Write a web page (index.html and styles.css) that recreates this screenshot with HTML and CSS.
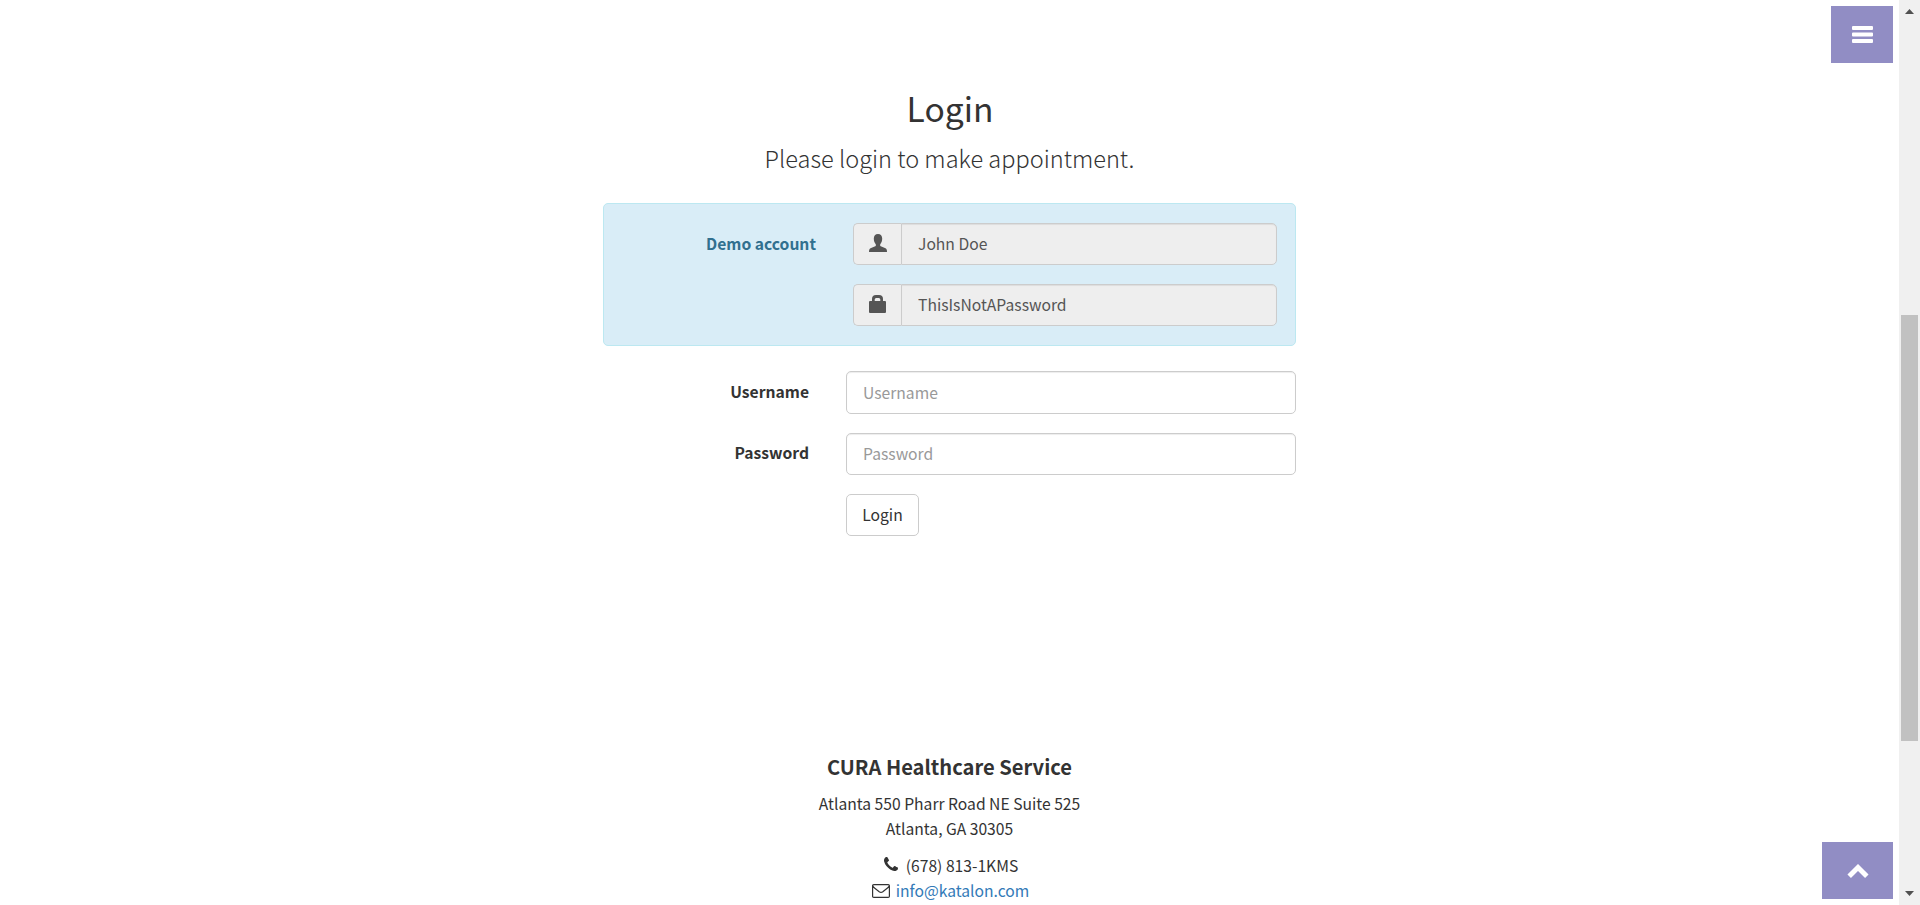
FILE: index.html
```html
<!DOCTYPE html>
<html lang="en">
<head>
<meta charset="utf-8">
<title>CURA Healthcare Service</title>
<link rel="stylesheet" href="styles.css">
</head>
<body>
<div class="page">
  <main class="content">
    <section class="login">
      <h2 class="title">Login</h2>
      <p class="lead">Please login to make appointment.</p>
      <form class="form">
        <div class="demo">
          <div class="row">
            <label class="label">Demo account</label>
            <div class="group">
              <span class="addon"><svg class="glyph" viewBox="0 0 18 18"><path d="M9 0C6.300 0 4.800 1.900 4.800 4.600 4.800 7 5.500 9 6.800 10.200V12L1.500 14.300C.5 14.800 0 15.700 0 18H18C18 15.700 17.500 14.800 16.500 14.300L11.200 12V10.200C12.500 9 13.200 7 13.200 4.600 13.200 1.900 11.700 0 9 0Z"/></svg></span>
              <input class="input joined" value="John Doe" readonly>
            </div>
          </div>
          <div class="row">
            <span class="label"></span>
            <div class="group">
              <span class="addon"><svg class="glyph" viewBox="0 0 18 18"><path fill-rule="evenodd" d="M3 6V4Q3 0 7 0H10Q14 0 14 4V6H16Q17 6 17 7V17Q17 18 16 18H1Q0 18 0 17V7Q0 6 1 6ZM5.700 6H11.300V4.500Q11.300 3 9.800 3H7.200Q5.700 3 5.700 4.500Z"/></svg></span>
              <input class="input joined" value="ThisIsNotAPassword" readonly>
            </div>
          </div>
        </div>
        <div class="row">
          <label class="label" for="username">Username</label>
          <input class="input" id="username" placeholder="Username">
        </div>
        <div class="row">
          <label class="label" for="password">Password</label>
          <input class="input" id="password" type="password" placeholder="Password">
        </div>
        <div class="row">
          <span class="label"></span>
          <button class="submit" type="button">Login</button>
        </div>
      </form>
    </section>
    <footer class="footer">
      <h4 class="brand">CURA Healthcare Service</h4>
      <p class="address">Atlanta 550 Pharr Road NE Suite 525<br>Atlanta, GA 30305</p>
      <ul class="contacts">
        <li class="contact phone-line"><svg class="phone" viewBox="0 0 1408 1408"><path d="M1408 1112q0 27-10 70.500t-21 68.500q-21 50-122 106-94 51-186 51-27 0-53-3.500t-57.500-12.500-47-14.500-55.500-20.500-49-18q-98-35-175-83-127-79-264-216t-216-264q-48-77-83-175-3-9-18-49t-20.500-55.500-14.500-47-12.500-57.500-3.500-53q0-92 51-186 56-101 106-122 25-11 68.500-21t70.500-10q14 0 21 3 18 6 53 76 11 19 30 54t35 63.500 31 53.500q3 4 17.500 25t21.500 35.500 7 28.500q0 20-28.500 50t-62 55-62 53-28.500 46q0 9 5 22.500t8.500 20.500 14 24 11.500 19q76 137 174 235t235 174q2 1 19 11.500t24 14 20.500 8.500 22.500 5q18 0 46-28.500t53-62 55-62 50-28.500q14 0 28.500 7t35.500 21.500 25 17.500q25 15 53.500 31t63.500 35 54 30q70 35 76 53 3 7 3 21z"/></svg><span>(678) 813-1KMS</span></li>
        <li class="contact"><svg class="mail" viewBox="0 0 18 14"><path d="M1.800.6H16.200Q17.400.6 17.400 1.800V12.200Q17.400 13.400 16.200 13.400H1.800Q.6 13.400.6 12.200V1.800Q.6.6 1.800.6ZM.7 1.800Q1.200 3 2.500 4L7.200 7.700Q9 9 10.800 7.700L15.500 4Q16.800 3 17.300 1.800"/></svg><a class="link" href="mailto:info@katalon.com">info@katalon.com</a></li>
      </ul>
    </footer>
    <a class="toggle" href="#"><svg class="bars" viewBox="0 0 21 17"><path d="M1 0H20Q21 0 21 1V3Q21 4 20 4H1Q0 4 0 3V1Q0 0 1 0ZM1 6.500H20Q21 6.500 21 7.500V9.500Q21 10.500 20 10.500H1Q0 10.500 0 9.500V7.500Q0 6.500 1 6.500ZM1 13H20Q21 13 21 14V16Q21 17 20 17H1Q0 17 0 16V14Q0 13 1 13Z"/></svg></a>
    <a class="to-top" href="#"><svg class="chevron" viewBox="0 0 22 15"><path d="M2.200 12.200 11 3.500 19.800 12.200"/></svg></a>
  </main>
  <div class="scrollbar">
    <svg class="arrow" viewBox="0 0 9 5"><path d="M0 5 4.500 0 9 5Z"/></svg>
    <div class="track"><div class="thumb"></div></div>
    <svg class="arrow" viewBox="0 0 9 5"><path d="M0 0H9L4.500 5Z"/></svg>
  </div>
</div>
</body>
</html>
```
FILE: styles.css
```css
* { box-sizing: border-box; }
body {
  margin: 0;
  color: #333;
  background: #fff;
  font-family: "Source Sans Pro", "Noto Sans CJK SC", sans-serif;
  font-size: 15.670px;
  line-height: 25px;
  overflow: hidden;
}
.page { display: flex; height: 905px; }
.content { position: relative; flex: 1; padding-top: 83px; overflow: hidden; }
.login { width: 693px; height: 652px; margin: 0 auto; }
.title { margin: 0; padding-left: 1px; font-size: 33.600px; font-weight: 400; line-height: 50px; text-align: center; }
.lead { margin: 8px 0 27px; font-size: 23.550px; font-weight: 300; line-height: 35px; text-align: center; }
.form { display: flex; flex-direction: column; gap: 18.750px; }
.demo {
  display: flex;
  flex-direction: column;
  gap: 18.750px;
  height: 143px;
  margin-bottom: 6.650px;
  padding: 19px 18px;
  color: #31708f;
  background: #d9edf7;
  border: 1px solid #bce8f1;
  border-radius: 5px;
}
.row { display: flex; height: 42.500px; }
.demo .row { height: 42.400px; }
.demo .row + .row { height: 43px; }
.label { flex: 1; padding: 7.600px 37px 0 0; font-weight: 700; text-align: right; }
.group { display: flex; width: 424px; }
.addon {
  display: flex;
  justify-content: center;
  width: 48px;
  padding-top: 10px;
  background: #eee;
  border: 1px solid #ccc;
  border-right: 0;
  border-radius: 5px 0 0 5px;
}
.glyph { width: 18px; height: 18px; fill: #555; }
.input {
  width: 450px;
  height: 100%;
  padding: 0 16px;
  color: #555;
  background: #fff;
  border: 1px solid #ccc;
  border-radius: 5px;
  box-shadow: inset 0 1px 1px rgba(0, 0, 0, .075);
  font: inherit;
}
.input::placeholder { color: #999; opacity: 1; }
.joined { flex: 1; width: auto; min-width: 0; padding-bottom: 1.500px; background: #eee; border-radius: 0 5px 5px 0; }
.submit {
  width: 73px;
  margin-right: 377px;
  padding: 0 0 2px;
  color: #333;
  background: #fff;
  border: 1px solid #ccc;
  border-radius: 5px;
  font: inherit;
}
.footer { padding-top: 18px; text-align: center; }
.brand { margin: 0 0 10.500px; font-size: 20.150px; font-weight: 700; line-height: 27px; }
.address { margin: 0 0 12px; }
.contacts { margin: 0; padding: 0; list-style: none; }
.contact { display: flex; justify-content: center; align-items: center; gap: 6px; height: 25px; padding-left: 2px; }
.phone-line { gap: 8px; padding-left: 3px; }
.phone { width: 14px; height: 14px; margin-top: -2px; fill: #333; }
.mail { width: 18px; height: 14px; margin-top: 2px; fill: none; stroke: #333; stroke-width: 1.200; }
.link { color: #337ab7; text-decoration: none; }
.toggle, .to-top {
  position: absolute;
  right: 6px;
  display: flex;
  align-items: center;
  justify-content: center;
  height: 57px;
  background: #918dc4;
}
.toggle { top: 6px; width: 62px; }
.to-top { bottom: 6px; width: 71px; }
.bars { width: 21px; height: 17px; fill: #fff; }
.chevron { width: 22px; height: 15px; margin-top: 2px; fill: none; stroke: #fff; stroke-width: 5; }
.scrollbar {
  display: flex;
  flex-direction: column;
  align-items: center;
  justify-content: space-between;
  width: 21px;
  padding: 9px 0;
  background: #f0f0f0;
}
.arrow { width: 9px; height: 5px; fill: #505050; }
.track { width: 17px; flex: 1; padding-top: 301px; }
.thumb { height: 426px; background: #c1c1c1; }
```
